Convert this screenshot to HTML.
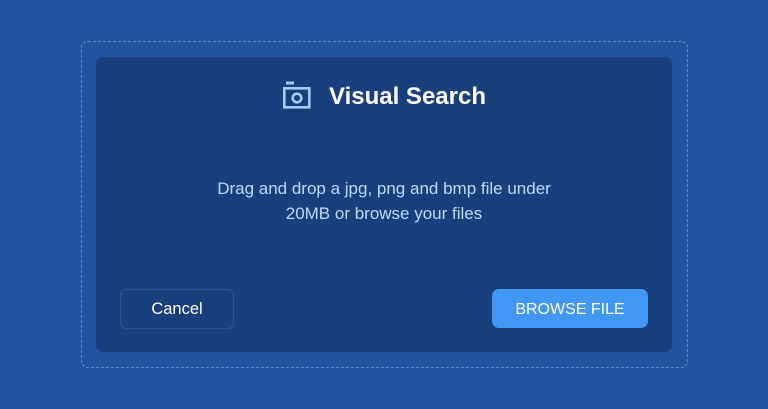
<!DOCTYPE html>
<html><head><meta charset="utf-8"><style>
*{margin:0;padding:0;box-sizing:border-box}
body{width:768px;height:409px;background:#2253a1;font-family:"Liberation Sans",sans-serif;position:relative;overflow:hidden}
.dash{position:absolute;left:81px;top:41px;width:607px;height:327px;border:1px dashed #5a8fd6;border-radius:7px}
.card{position:absolute;left:96px;top:57px;width:576px;height:295px;background:#1a3f7d;border-radius:6px}
.title{position:absolute;left:329px;top:83px;font-size:24px;font-weight:bold;color:#fff;white-space:nowrap}
.icon{position:absolute;left:282px;top:81px}
.desc{position:absolute;left:0;width:768px;top:176px;text-align:center;font-size:17px;line-height:25px;color:#bcdaf8}
.cancel{position:absolute;left:120px;top:289px;width:114px;height:40px;border:1px solid #2c5294;border-radius:6px;color:#fff;font-size:16.5px;text-align:center;line-height:38px}
.browse{position:absolute;left:492px;top:289px;width:156px;height:39px;background:#4297f5;border-radius:7px;color:#fff;font-size:16px;text-align:center;line-height:41px}
</style></head><body>
<div class="dash"></div>
<div class="card"></div>
<svg class="icon" width="30" height="30" viewBox="0 0 30 30">
<rect x="4" y="0.5" width="8" height="3" fill="#a7cdf5"/>
<rect x="2.3" y="7.3" width="25" height="19" fill="none" stroke="#a7cdf5" stroke-width="2.6"/>
<circle cx="15" cy="17" r="4.3" fill="none" stroke="#a7cdf5" stroke-width="2.6"/>
</svg>
<div class="title">Visual Search</div>
<div class="desc">Drag and drop a jpg, png and bmp file under<br>20MB or browse your files</div>
<div class="cancel">Cancel</div>
<div class="browse">BROWSE FILE</div>
</body></html>
